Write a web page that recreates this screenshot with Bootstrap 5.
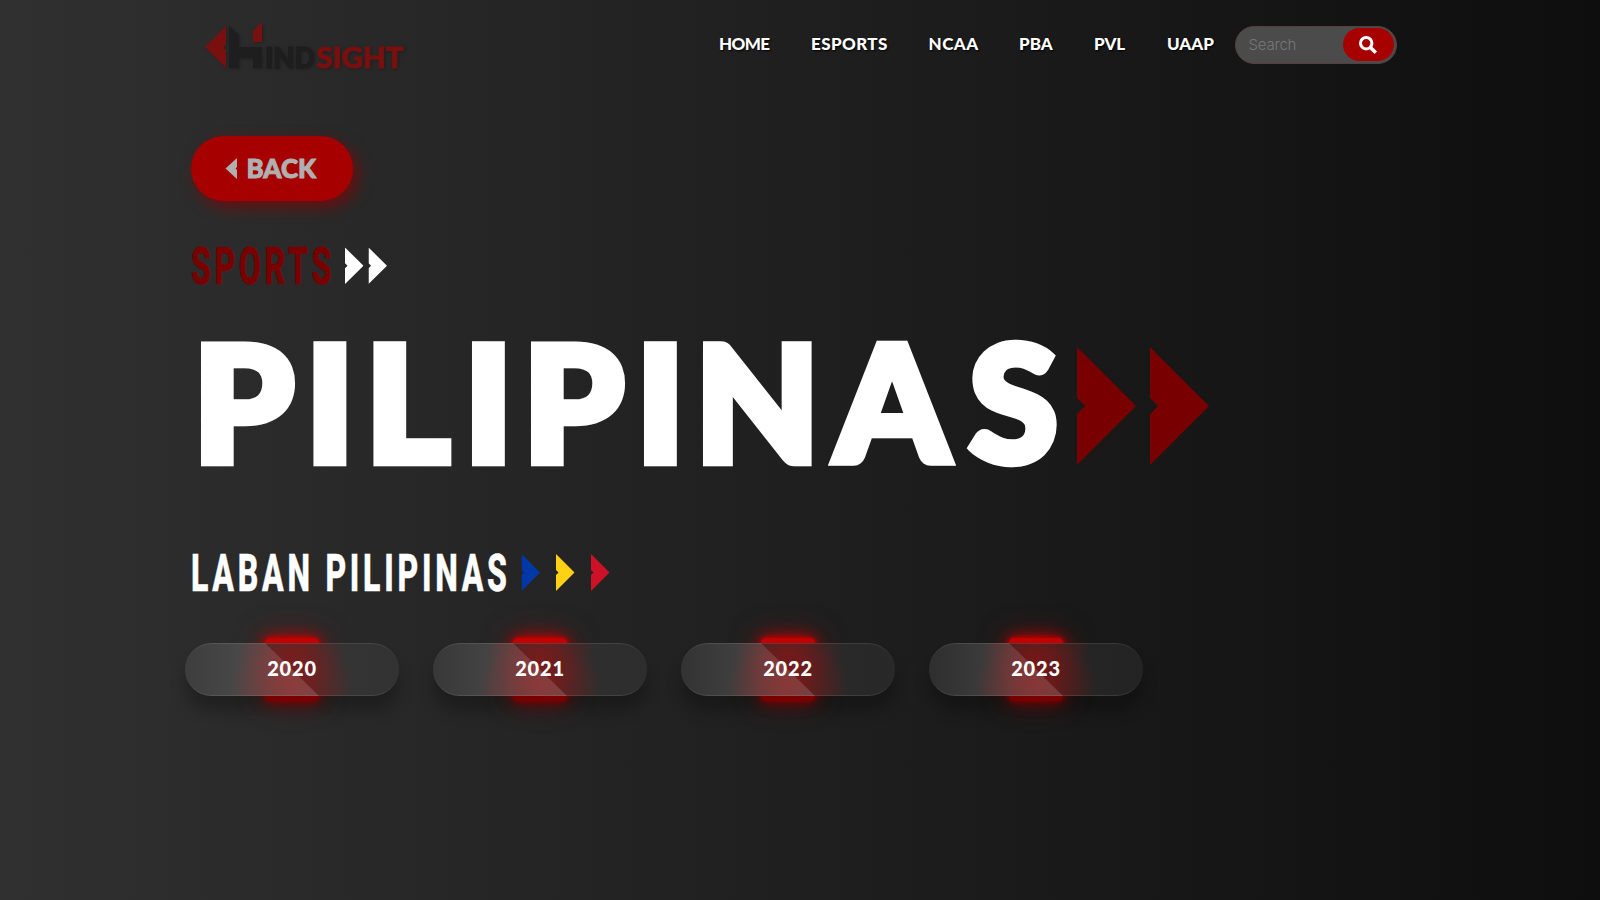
<!DOCTYPE html>
<html lang="en">
<head>
<meta charset="utf-8">
<meta name="viewport" content="width=device-width, initial-scale=1">
<title>Hindsight</title>
<link href="https://cdn.jsdelivr.net/npm/bootstrap@5.3.0/dist/css/bootstrap.min.css" rel="stylesheet">
<style>
body{min-height:900px;background:linear-gradient(to right,#303030,#0e0e0e);color:#fff;font-family:Lato,"Liberation Sans",sans-serif;overflow:hidden}
svg{display:block;overflow:visible}
.wrap{width:1220px;margin-left:185px}
.topbar{height:90px}
.brand-logo{margin:22px 0 0 20px}
.main-links{margin-left:316px;padding-top:32px;font-size:17px;font-weight:900;line-height:23px}
.main-links a{color:#fff;text-decoration:none;text-shadow:1px 1px 2px #000;white-space:nowrap}
.main-links a:nth-child(1){width:92px;letter-spacing:-.6px}
.main-links a:nth-child(2){width:117.5px;letter-spacing:.4px}
.main-links a:nth-child(3){width:90.5px;letter-spacing:.5px}
.main-links a:nth-child(4){width:75px}
.main-links a:nth-child(5){width:73px}
.main-links a:nth-child(6){width:48px}
.search-pill{width:162px;height:38px;margin:26px 0 0 19.500px;background:#4b4b4b;border:1px solid #583f3f;border-radius:19px;padding:1px 2px 2px 13px}
.search-pill input{width:90px;background:none;border:0;outline:0;padding:0;font:300 15px Inter,sans-serif;letter-spacing:-.2px;color:#fff}
.search-pill input::placeholder{color:#777;opacity:1}
.search-pill button{width:51px;height:33px;border:0;border-radius:17px;background:#a60000}
.back-btn{width:162px;height:65px;margin:46px 0 0 6px;border-radius:33px;background:#a60000;box-shadow:5px 6px 15px rgba(140,0,0,.7);color:#b0b0b0;text-decoration:none}
.year-row{gap:34px;margin-top:42px}
.year{width:214px;height:53px;position:relative}
.year::before,.year::after{content:"";position:absolute;left:80px;width:54px;height:30px;border-radius:5px;background:#c50000;box-shadow:0 0 5px #c50000,0 0 15px #c50000,0 0 30px rgba(197,0,0,.5)}
.year::before{top:-5px}
.year::after{bottom:-5px;background:#a00000;box-shadow:0 0 5px #a80000,0 0 15px #a80000,0 0 30px rgba(170,0,0,.45)}
.year a{position:absolute;z-index:1;inset:0;border-radius:27px;
background:radial-gradient(ellipse 52px 40px at 107px 10px,rgba(165,15,15,.4),rgba(165,15,15,.15) 60%,transparent),radial-gradient(ellipse 62px 48px at 107px 44px,rgba(165,15,15,.5),rgba(165,15,15,.22) 55%,transparent),linear-gradient(to right,transparent 50px,rgba(140,20,20,.25) 90px,rgba(140,20,20,.25) 124px,transparent 164px),linear-gradient(rgba(255,255,255,.05),rgba(255,255,255,.05)),linear-gradient(to right,#303030,#0e0e0e) fixed;
box-shadow:0 15px 15px rgba(0,0,0,.25);color:#fff;text-decoration:none;font-size:20px;font-weight:900;overflow:hidden}
.year a::before{content:"";position:absolute;inset:0;background:linear-gradient(to right,rgba(255,255,255,.03),rgba(255,255,255,.12) 80px,rgba(255,255,255,.15) 134px);clip-path:polygon(0 0,80px 0,134px 100%,0 100%)}
.year a::after{content:"";position:absolute;inset:0;border-radius:27px;border-top:1px solid rgba(255,255,255,.1);border-bottom:1px solid rgba(255,255,255,.1)}
.year span{position:relative;top:-1.5px;letter-spacing:.8px}
</style>
</head>
<body>
<svg width="0" height="0" class="position-absolute"><defs><symbol id="arrow" viewBox="0 0 58 118" preserveAspectRatio="none"><path fill="currentColor" d="M0 0 58 59 0 118V67L8 59 0 51Z"/></symbol></defs></svg>
<div class="wrap">
<header class="topbar d-flex align-items-start">
<a href="#" class="brand-logo"><svg width="198" height="50" viewBox="205 22 198 50" style="filter:drop-shadow(1px 1px 1.5px rgba(0,0,0,.25))">
<path fill="#781010" d="M205 47 226 26V45L223 48 226 50V68ZM253 42V31L262 22V42Z"/>
<path fill="#1e1e1e" d="M229 26 239 35V47H262V68H253V58H239V68H229Z"/>
<g font-family="Lato" font-weight="900" font-size="29" stroke-width="1"><text x="265" y="67.500" textLength="50" lengthAdjust="spacingAndGlyphs" fill="#1e1e1e" stroke="#1e1e1e">IND</text><text x="316.500" y="67.500" textLength="87" lengthAdjust="spacingAndGlyphs" fill="#781010" stroke="#781010">SIGHT</text></g></svg></a>
<nav class="main-links d-flex"><a href="#">HOME</a><a href="#">ESPORTS</a><a href="#">NCAA</a><a href="#">PBA</a><a href="#">PVL</a><a href="#">UAAP</a></nav>
<form class="search-pill d-flex align-items-center justify-content-between"><input type="text" placeholder="Search"><button type="button" class="d-flex align-items-center justify-content-center p-0"><svg width="18" height="18" viewBox="0 0 18 18" fill="none" stroke="#fff" stroke-width="3"><circle cx="7.200" cy="7.200" r="5.700"/><path d="m11.200 11.200 5.600 5.600" stroke-width="3.500"/></svg></button></form>
</header>
<a href="#" class="back-btn d-block"><svg width="162" height="65" viewBox="191 136 162 65"><path fill="currentColor" d="M225.500 168.500 237 158V167L235.500 168.500 237 170V179Z"/><text x="246.500" y="178" font-family="Lato" font-weight="900" font-size="27" textLength="69.500" lengthAdjust="spacingAndGlyphs" fill="currentColor" stroke="currentColor" stroke-width="1">BACK</text></svg></a>
<h2 class="m-0"><svg width="1215" height="120" viewBox="185 201 1215 120"><g transform="translate(191 283.500) scale(.61 1)"><text font-family="Roboto" font-weight="800" font-size="52.500" textLength="230" fill="#780000" stroke="#780000" stroke-width=".5">SPORTS</text></g><g color="#fff"><use href="#arrow" x="345" y="247.500" width="18.500" height="36.500"/><use href="#arrow" x="368.500" y="247.500" width="18.500" height="36.500"/></g></svg></h2>
<h1 class="m-0"><svg width="1215" height="180" viewBox="185 321 1215 180"><text x="193 305.500 365.500 464 523 636 695 835.500 969" y="461.500" font-family="Lato" font-weight="900" font-size="161" fill="#fff" stroke="#fff" stroke-width="8.500">PILIPINAS</text><g color="#780000"><use href="#arrow" x="1077" y="347" width="59" height="118"/><use href="#arrow" x="1150" y="347" width="59" height="118"/></g></svg></h1>
<h2 class="m-0"><svg width="1215" height="100" viewBox="185 501 1215 100"><g transform="translate(191 591) scale(.61 1)"><text font-family="Roboto" font-weight="800" font-size="52.500" textLength="518" fill="#fff" stroke="#fff" stroke-width=".5">LABAN PILIPINAS</text></g><use href="#arrow" x="521.500" y="554" width="18.500" height="37" color="#0038a8"/><use href="#arrow" x="556" y="554" width="18.500" height="37" color="#fcd116"/><use href="#arrow" x="591" y="554" width="18.500" height="37" color="#ce1126"/></svg></h2>
<div class="year-row d-flex">
<div class="year"><a href="#" class="d-flex align-items-center justify-content-center"><span>2020</span></a></div>
<div class="year"><a href="#" class="d-flex align-items-center justify-content-center"><span>2021</span></a></div>
<div class="year"><a href="#" class="d-flex align-items-center justify-content-center"><span>2022</span></a></div>
<div class="year"><a href="#" class="d-flex align-items-center justify-content-center"><span>2023</span></a></div>
</div>
</div>
<script src="https://cdn.jsdelivr.net/npm/bootstrap@5.3.0/dist/js/bootstrap.bundle.min.js"></script>
</body>
</html>
